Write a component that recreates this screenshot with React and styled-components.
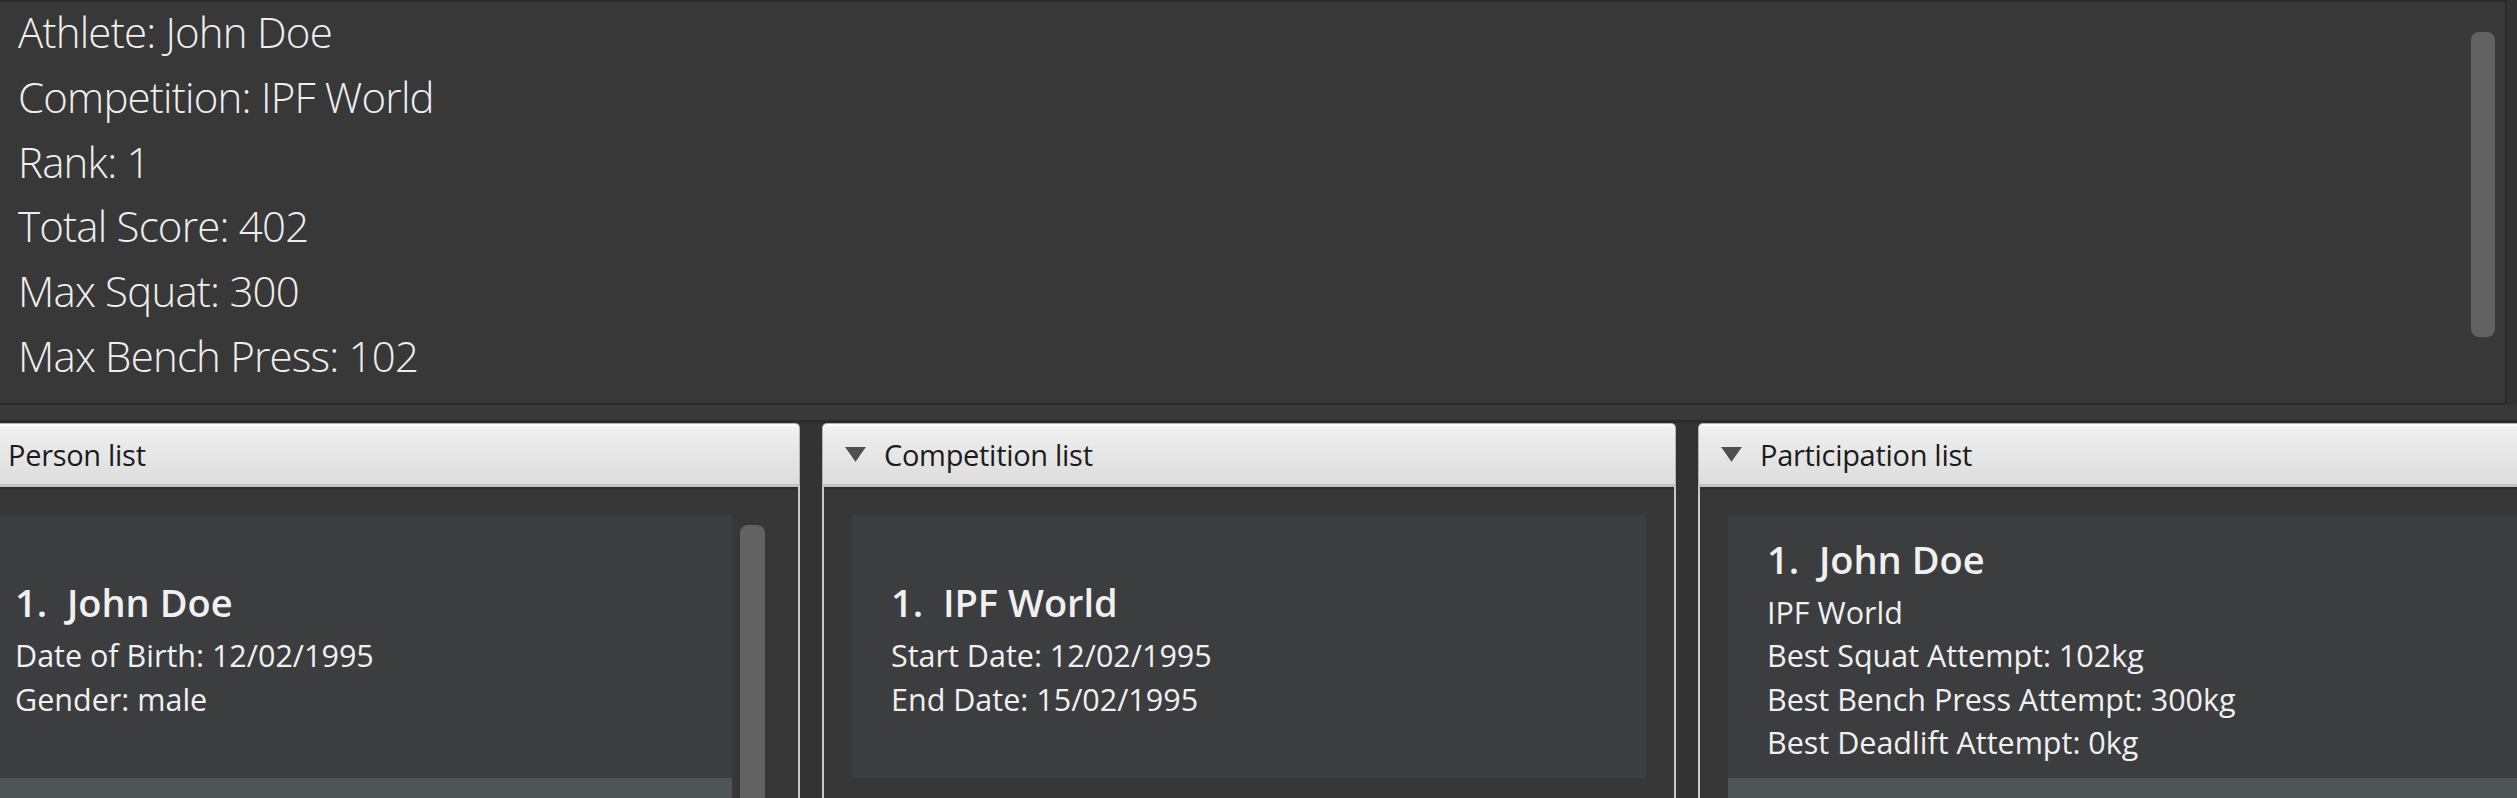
import React from "react";
import styled, { createGlobalStyle } from "styled-components";

const GlobalStyle = createGlobalStyle`
  html, body { margin: 0; padding: 0; background: #333333; }
  body { font-family: "Open Sans", "Noto Sans", "DejaVu Sans", sans-serif; overflow: hidden; }
  * { box-sizing: border-box; }
`;

const Window = styled.div`
  width: 2517px;
  height: 798px;
  overflow: hidden;
  background: #333333;
  display: flex;
  flex-direction: column;
`;

const ResultPanel = styled.section`
  width: 2507px;
  height: 405px;
  flex: none;
  background: #383838;
  border: 2px solid #2a2a2a;
  border-left: none;
  display: flex;
  overflow: hidden;
`;

const ResultText = styled.div`
  flex: 1;
  padding-left: 18px;
  margin-top: -2px;
  font-weight: 300;
  font-size: 42px;
  line-height: 64.8px;
  letter-spacing: -0.8px;
  color: #eeeeee;
`;

const ScrollTrack = styled.div`
  flex: none;
  width: ${(p) => p.$width}px;
  padding: ${(p) => p.$pad};
`;

const Thumb = styled.div`
  width: 100%;
  height: ${(p) => p.$h}px;
  background: #626262;
  border-radius: 8px;
`;

const Divider = styled.div`
  height: 18px;
  flex: none;
  background: #393939;
  border-bottom: 3px solid #2b2b2b;
`;

const ListsRow = styled.div`
  flex: 1;
  min-height: 0;
  display: flex;
  gap: 22px;
  margin-left: -54px;
`;

const TitledPane = styled.section`
  width: 854px;
  flex: none;
  display: flex;
  flex-direction: column;
`;

const PaneHeader = styled.header`
  height: 64px;
  flex: none;
  display: flex;
  align-items: center;
  gap: 18px;
  padding-left: 22px;
  border: 1px solid #b4b4b4;
  border-bottom: 3px solid #c3c3c3;
  border-radius: 5px 5px 0 0;
  background: linear-gradient(#f3f3f3 0%, #ebebeb 25%, #dddddd 100%);
  box-shadow: inset 0 2px 0 #fbfbfb;
  font-size: 29px;
  letter-spacing: -0.3px;
  color: #1c1c1c;
`;

const Arrow = styled.svg`
  width: 21px;
  height: 15px;
  flex: none;
  filter: drop-shadow(0 1.5px 0 #ffffff);
`;

const PaneBody = styled.div`
  flex: 1;
  min-height: 0;
  display: flex;
  background: #373737;
  border-left: 2px solid #c9c9c9;
  border-right: 2px solid #c9c9c9;
  box-shadow: inset 0 2px 0 #2e2e2e;
  padding: 28px 28px 0 28px;
`;

const CellColumn = styled.div`
  flex: 1;
  min-width: 0;
  display: flex;
  flex-direction: column;
`;

const Cell = styled.div`
  height: 263px;
  flex: none;
  padding-left: 39px;
  padding-top: 5px;
  display: flex;
  flex-direction: column;
  justify-content: center;
  background: ${(p) => (p.$alt ? "#4f5457" : "#3c3d3f")};
  color: #f0f0f0;
`;

const CellTitle = styled.div`
  font-weight: 600;
  font-size: 38px;
  line-height: 51px;
  padding-bottom: 6px;
  letter-spacing: 0;
  white-space: nowrap;
`;

const CellLine = styled.div`
  font-size: 30.5px;
  line-height: 43.3px;
  letter-spacing: 0;
  white-space: nowrap;
`;

const resultLines = [
  "Athlete: John Doe",
  "Competition: IPF World",
  "Rank: 1",
  "Total Score: 402",
  "Max Squat: 300",
  "Max Bench Press: 102",
];

const panes = [
  {
    title: "Person list",
    scroll: true,
    items: [
      { name: "John Doe", lines: ["Date of Birth: 12/02/1995", "Gender: male"] },
    ],
    more: true,
  },
  {
    title: "Competition list",
    scroll: false,
    items: [
      { name: "IPF World", lines: ["Start Date: 12/02/1995", "End Date: 15/02/1995"] },
    ],
    more: false,
  },
  {
    title: "Participation list",
    scroll: false,
    items: [
      {
        name: "John Doe",
        lines: [
          "IPF World",
          "Best Squat Attempt: 102kg",
          "Best Bench Press Attempt: 300kg",
          "Best Deadlift Attempt: 0kg",
        ],
      },
    ],
    more: true,
  },
];

function Pane({ pane }) {
  return (
    <TitledPane>
      <PaneHeader>
        <Arrow viewBox="0 0 21 15">
          <polygon points="0,0 21,0 10.5,15" fill="#505050" />
        </Arrow>
        <span>{pane.title}</span>
      </PaneHeader>
      <PaneBody>
        <CellColumn>
          {pane.items.map((it, i) => (
            <Cell key={i}>
              <CellTitle>
                {i + 1}.&nbsp;&nbsp;{it.name}
              </CellTitle>
              {it.lines.map((l) => (
                <CellLine key={l}>{l}</CellLine>
              ))}
            </Cell>
          ))}
          {pane.more && <Cell $alt />}
        </CellColumn>
        {pane.scroll && (
          <ScrollTrack $width={38} $pad="10px 5px 0 8px">
            <Thumb $h={400} />
          </ScrollTrack>
        )}
      </PaneBody>
    </TitledPane>
  );
}

export default function App() {
  return (
    <Window>
      <GlobalStyle />
      <ResultPanel>
        <ResultText>
          {resultLines.map((l) => (
            <div key={l}>{l}</div>
          ))}
        </ResultText>
        <ScrollTrack $width={34} $pad="30px 10px 0 0">
          <Thumb $h={305} />
        </ScrollTrack>
      </ResultPanel>
      <Divider />
      <ListsRow>
        {panes.map((p) => (
          <Pane key={p.title} pane={p} />
        ))}
      </ListsRow>
    </Window>
  );
}
